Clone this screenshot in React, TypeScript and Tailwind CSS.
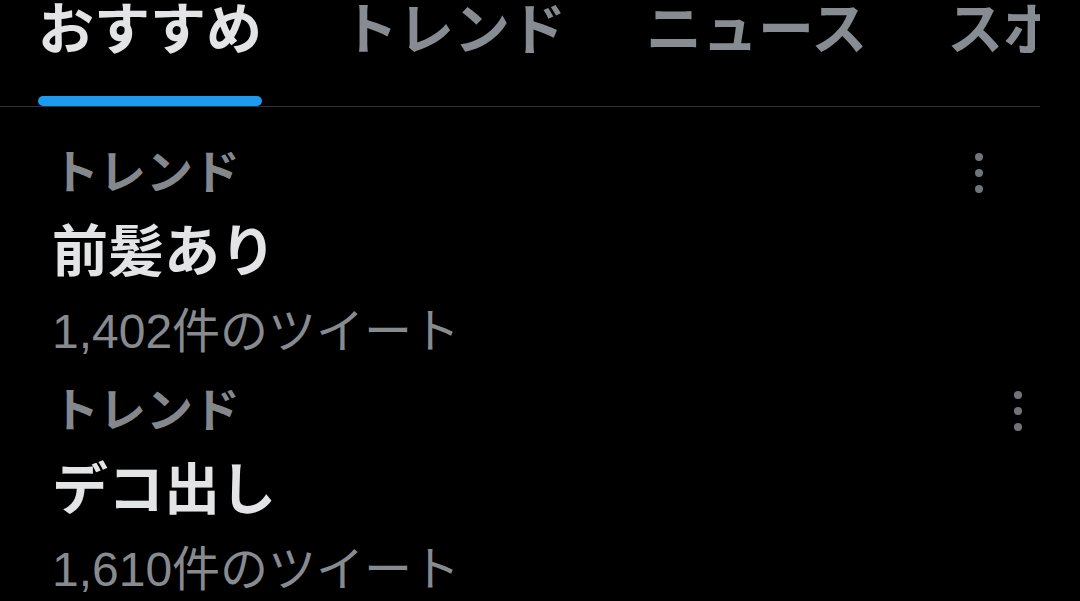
const tabs = ["おすすめ", "トレンド", "ニュース", "スポーツ"];

const trends = [
  { title: "前髪あり", count: "1,402件のツイート", dotsPad: "pr-[57px]" },
  { title: "デコ出し", count: "1,610件のツイート", dotsPad: "pr-[18px]" },
];

const MoreDots = () => (
  <div className="flex flex-col items-center gap-[8px]">
    <span className="block h-[8px] w-[8px] rounded-full bg-[#6f7479]" />
    <span className="block h-[8px] w-[8px] rounded-full bg-[#6f7479]" />
    <span className="block h-[8px] w-[8px] rounded-full bg-[#6f7479]" />
  </div>
);

const App = () => {
  return (
    <div
      className="h-[601px] w-[1080px] overflow-hidden bg-black"
      style={{ fontFamily: '"Liberation Sans", "Noto Sans CJK JP", sans-serif' }}
    >
      <div className="w-[1040px] overflow-hidden">
        {/* tabs */}
        <div className="flex h-[107px] gap-[80px] border-b border-[#2f3336] pl-[38px]">
          {tabs.map((tab, i) => (
            <div key={tab} className="flex shrink-0 flex-col justify-between">
              <span
                className={
                  "mt-[2px] whitespace-nowrap text-[56px] leading-[56px] font-bold " +
                  (i === 0 ? "text-[#e3e4e5]" : "text-[#878c92]")
                }
              >
                {tab}
              </span>
              {i === 0 ? (
                <div className="h-[10px] w-full rounded-full bg-[#1d9bf0]" />
              ) : (
                <div className="h-[10px]" />
              )}
            </div>
          ))}
        </div>

        {/* trends */}
        <div className="pt-[26px]">
          {trends.map((t) => (
            <div key={t.title} className={"flex items-start justify-between pl-[52px] " + t.dotsPad}>
              <div className="flex flex-col">
                <span className="text-[47px] leading-[79px] font-bold text-[#84888d]">トレンド</span>
                <span className="text-[56px] leading-[80px] font-bold text-[#e3e4e5]">{t.title}</span>
                <span className="text-[48px] leading-[79px] text-[#878b90]">{t.count}</span>
              </div>
              <div className="flex h-[79px] items-center">
                <MoreDots />
              </div>
            </div>
          ))}
        </div>
      </div>
    </div>
  );
};

export default App;
